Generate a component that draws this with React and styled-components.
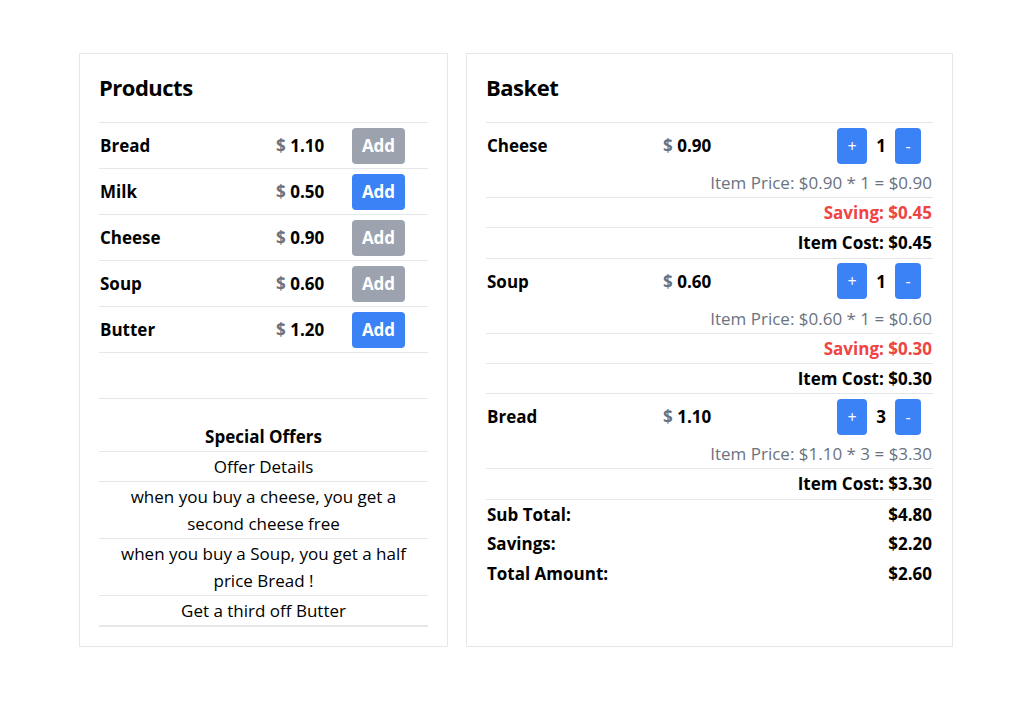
import React from 'react';
import styled, { createGlobalStyle } from 'styled-components';

const GlobalStyle = createGlobalStyle`
  body {
    margin: 0;
    background: #fff;
    font-family: "Open Sans", "Noto Sans", sans-serif;
    color: #000;
  }
`;

const products = [
  { name: 'Bread', price: 1.1, added: true },
  { name: 'Milk', price: 0.5, added: false },
  { name: 'Cheese', price: 0.9, added: true },
  { name: 'Soup', price: 0.6, added: true },
  { name: 'Butter', price: 1.2, added: false },
];

const offers = [
  'when you buy a cheese, you get a second cheese free',
  'when you buy a Soup, you get a half price Bread !',
  'Get a third off Butter',
];

const basket = [
  { name: 'Cheese', price: 0.9, qty: 1, saving: 0.45 },
  { name: 'Soup', price: 0.6, qty: 1, saving: 0.3 },
  { name: 'Bread', price: 1.1, qty: 3, saving: 0 },
];

const money = (n) => n.toFixed(2);

const Page = styled.div`
  display: grid;
  grid-template-columns: 369px 487px;
  gap: 18px;
  padding: 53px 0 0 79px;
  align-items: stretch;
`;

const Card = styled.section`
  border: 1px solid #e5e7eb;
  padding: 19px 19px 19px;
`;

const Title = styled.h2`
  margin: 0 0 19px;
  font-size: 22px;
  line-height: 28px;
  padding-bottom: 2px;
  letter-spacing: -0.5px;
  font-weight: 700;
`;

const ProductRow = styled.div`
  display: grid;
  grid-template-columns: 177px 76px 1fr;
  align-items: center;
  height: 45px;
  border-top: 1px solid #e5e7eb;
  font-size: 17px;
  font-weight: 700;
  &:last-of-type {
    border-bottom: 1px solid #e5e7eb;
  }
`;

const Name = styled.span`
  padding-left: 1px;
`;

const Price = styled.span`
  white-space: nowrap;
`;

const Dollar = styled.span`
  color: #6b7280;
`;

const AddButton = styled.button`
  width: 53px;
  height: 36px;
  border: none;
  border-radius: 4px;
  font-family: inherit;
  font-size: 17px;
  font-weight: 700;
  color: #fff;
  background: ${(p) => (p.$disabled ? '#9ca3af' : '#3b82f6')};
  padding: 0;
`;

const Spacer = styled.div`
  height: 45px;
  border-bottom: 1px solid #e5e7eb;
`;

const Offers = styled.div`
  text-align: center;
  font-size: 17px;
`;

const OfferHead = styled.div`
  padding-top: 24px;
  line-height: 28px;
  font-weight: 700;
  border-bottom: 1px solid #e5e7eb;
`;

const OfferRow = styled.div`
  line-height: 27px;
  padding: 1px 8px;
  border-bottom: ${(p) => (p.$last ? '2px' : '1px')} solid #e5e7eb;
`;

const BasketItem = styled.div`
  border-top: 1px solid #e5e7eb;
`;

const BasketRow = styled.div`
  display: grid;
  grid-template-columns: 177px 1fr auto;
  align-items: center;
  height: 45px;
  font-size: 17px;
  font-weight: 700;
  padding-right: 12px;
`;

const Qty = styled.div`
  display: flex;
  align-items: center;
`;

const StepButton = styled.button`
  width: ${(p) => (p.$wide ? '30px' : '26px')};
  height: 36px;
  border: none;
  border-radius: 4px;
  background: #3b82f6;
  color: #fff;
  font-family: inherit;
  font-size: 16px;
  padding: 0;
`;

const Count = styled.span`
  width: 28px;
  text-align: center;
`;

const Line = styled.div`
  text-align: right;
  font-size: 17px;
  line-height: 29.2px;
  padding-right: 1px;
  color: ${(p) => p.$color || '#000'};
  font-weight: ${(p) => (p.$bold ? 700 : 400)};
  border-top: ${(p) => (p.$top ? '1px solid #e5e7eb' : 'none')};
`;

const Totals = styled.div`
  border-top: 1px solid #e5e7eb;
`;

const TotalRow = styled.div`
  display: flex;
  justify-content: space-between;
  font-size: 17px;
  font-weight: 700;
  line-height: 29.5px;
  padding: 0 1px;
`;

export default function App() {
  return (
    <>
      <GlobalStyle />
      <Page>
        <Card>
          <Title>Products</Title>
          <div>
            {products.map((p) => (
              <ProductRow key={p.name}>
                <Name>{p.name}</Name>
                <Price>
                  <Dollar>$</Dollar> {money(p.price)}
                </Price>
                <div>
                  <AddButton $disabled={p.added}>Add</AddButton>
                </div>
              </ProductRow>
            ))}
          </div>
          <Spacer />
          <Offers>
            <OfferHead>Special Offers</OfferHead>
            <OfferRow>Offer Details</OfferRow>
            {offers.map((o, i) => (
              <OfferRow key={o} $last={i === offers.length - 1}>
                {o}
              </OfferRow>
            ))}
          </Offers>
        </Card>

        <Card>
          <Title>Basket</Title>
          {basket.map((b) => (
            <BasketItem key={b.name}>
              <BasketRow>
                <Name>{b.name}</Name>
                <Price>
                  <Dollar>$</Dollar> {money(b.price)}
                </Price>
                <Qty>
                  <StepButton $wide>+</StepButton>
                  <Count>{b.qty}</Count>
                  <StepButton>-</StepButton>
                </Qty>
              </BasketRow>
              <Line $color="#6b7280">
                Item Price: ${money(b.price)} * {b.qty} = ${money(b.price * b.qty)}
              </Line>
              {b.saving > 0 && (
                <Line $top $bold $color="#ef4444">
                  Saving: ${money(b.saving)}
                </Line>
              )}
              <Line $top $bold>
                Item Cost: ${money(b.price * b.qty - b.saving)}
              </Line>
            </BasketItem>
          ))}
          <Totals>
            <TotalRow>
              <span>Sub Total:</span>
              <span>$4.80</span>
            </TotalRow>
            <TotalRow>
              <span>Savings:</span>
              <span>$2.20</span>
            </TotalRow>
            <TotalRow>
              <span>Total Amount:</span>
              <span>$2.60</span>
            </TotalRow>
          </Totals>
        </Card>
      </Page>
    </>
  );
}
